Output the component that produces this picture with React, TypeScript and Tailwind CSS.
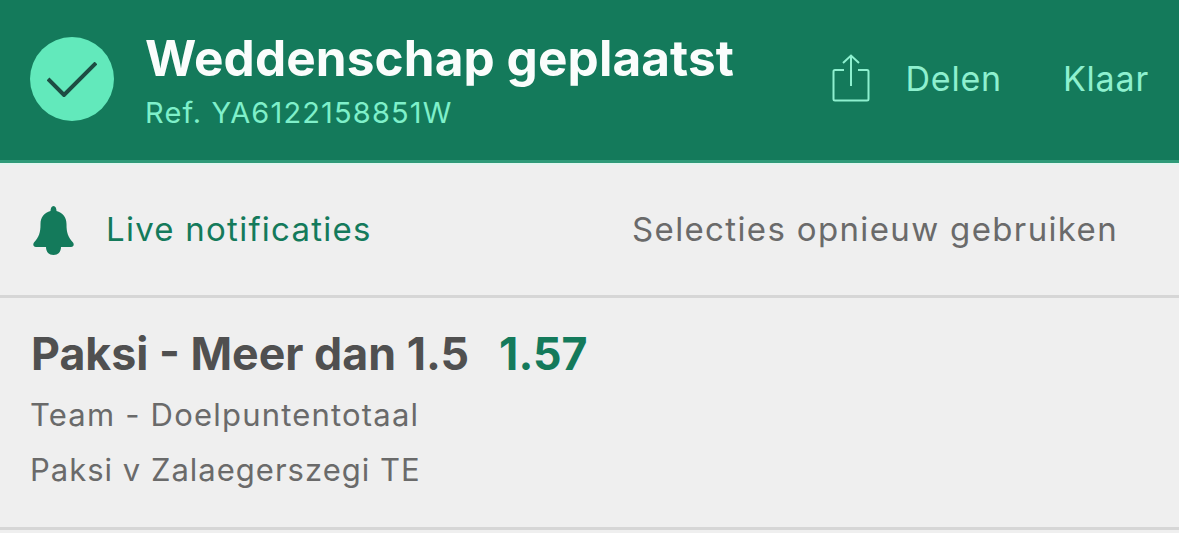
export default function App() {
  return (
    <div className="h-[533px] w-[1179px] overflow-hidden bg-[#efefef] font-['Inter',sans-serif]">
      <header className="flex h-[163px] items-center border-b-[3px] border-b-[#2f9a78] bg-[#147a5b] pl-[30px] pr-[30px]">
        <div className="mb-[2px] flex h-[84px] w-[84px] shrink-0 items-center justify-center rounded-full bg-[#62e9bb]">
          <svg width="50" height="35" viewBox="0 0 50 35" fill="none" stroke="#1d4d43" strokeWidth="4">
            <path d="M1 17 L17 33 L49 1" />
          </svg>
        </div>
        <div className="ml-[31px] flex flex-col">
          <div className="text-[49.5px] font-bold leading-[52px] tracking-[0.1px] text-[#fafdfc]">Weddenschap geplaatst</div>
          <div className="mt-[13px] text-[29px] leading-[32px] tracking-[1.15px] text-[#7ff0ca]">Ref. YA6122158851W</div>
        </div>
        <div className="ml-auto flex items-center pb-[4px] text-[34px] tracking-[0.8px] text-[#8ef0cf]">
          <svg width="38" height="48" viewBox="0 0 38 48" fill="none" stroke="#8ef0cf" strokeWidth="2">
            <path d="M19 32 V2 M11 9 L19 1.5 L27 9" />
            <path d="M12 16 H3 Q1.5 16 1.5 17.5 V45 Q1.5 46.5 3 46.5 H35 Q36.5 46.5 36.5 45 V17.5 Q36.5 16 35 16 H26" />
          </svg>
          <span className="ml-[35px]">Delen</span>
          <span className="ml-[61px]">Klaar</span>
        </div>
      </header>
      <section className="flex h-[135px] items-center justify-between border-t-2 border-b-[3px] border-t-[#e3f5ef] border-b-[#d6d6d6] pl-[33px] pr-[61px]">
        <div className="flex items-center">
          <svg width="41" height="49" viewBox="0 0 41 49" fill="#147a5b">
            <path d="M20.5 0 C22.5 0 23.5 2.5 23.5 5 C29.5 6.5 33.5 11 33.5 18 C33.5 27 35 31 40 36.5 C41.5 38.5 40.5 41 38 41 H28 C28 46 25 49 20.5 49 C16 49 13 46 13 41 H3 C0.5 41 -0.5 38.5 1 36.5 C6 31 7.5 27 7.5 18 C7.5 11 11.5 6.5 17.5 5 C17.5 2.5 18.5 0 20.5 0 Z" />
          </svg>
          <span className="ml-[32px] text-[33px] tracking-[1.25px] text-[#147a5b]">Live notificaties</span>
        </div>
        <span className="text-[33px] tracking-[1.35px] text-[#6a6a6a]">Selecties opnieuw gebruiken</span>
      </section>
      <section className="h-[232px] border-b-[3px] border-b-[#d6d6d6] pl-[31px] pt-[28px]">
        <div className="flex items-center text-[44.7px] font-bold leading-[56px]">
          <span className="text-[#505050]">Paksi - Meer dan 1.5</span>
          <span className="ml-[30px] text-[#147a5b]">1.57</span>
        </div>
        <div className="mt-[5px] -ml-px text-[31px] leading-[55px] text-[#6a6a6a]">
          <div className="tracking-[1.2px]">Team - Doelpuntentotaal</div>
          <div className="tracking-[1px]">Paksi v Zalaegerszegi TE</div>
        </div>
      </section>
    </div>
  );
}
